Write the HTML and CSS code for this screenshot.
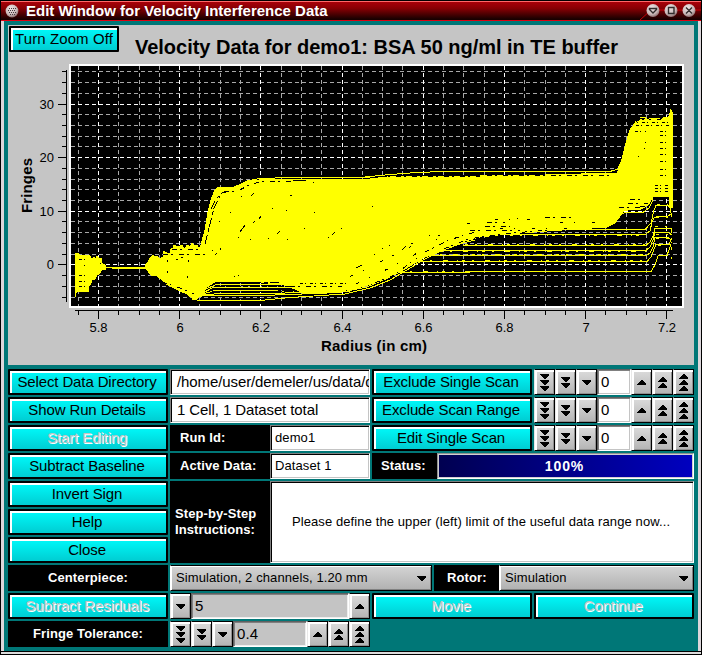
FILE: index.html
```html
<!DOCTYPE html>
<html lang="en">
<head>
<meta charset="utf-8">
<title>Edit Window for Velocity Interference Data</title>
<link rel="stylesheet" href="styles.css">
</head>
<body>
<svg class="defs" aria-hidden="true">
  <defs>
    <symbol id="d1" viewBox="0 0 9 17"><path d="M0 6h9v1L5 11H4L0 7z"/></symbol>
    <symbol id="d2" viewBox="0 0 9 17"><path d="M0 3h9v1L5 8H4L0 4zM0 9h9v1L5 14H4L0 10z"/></symbol>
    <symbol id="d3" viewBox="0 0 9 17"><path d="M0 0h9v1L5 5H4L0 1zM0 6h9v1L5 11H4L0 7zM0 12h9v1L5 17H4L0 13z"/></symbol>
    <symbol id="u1" viewBox="0 0 9 17"><path d="M4 6h1l4 4v1H0v-1z"/></symbol>
    <symbol id="u2" viewBox="0 0 9 17"><path d="M4 3h1l4 4v1H0V7zM4 9h1l4 4v1H0v-1z"/></symbol>
    <symbol id="u3" viewBox="0 0 9 17"><path d="M4 0h1l4 4v1H0V4zM4 6h1l4 4v1H0v-1zM4 12h1l4 4v1H0v-1z"/></symbol>
    <radialGradient id="ball" cx=".4" cy=".3" r=".75"><stop offset="0" stop-color="#f0e4e4"/><stop offset=".65" stop-color="#c8b8b8"/><stop offset="1" stop-color="#806060"/></radialGradient>
  </defs>
</svg>
<div class="window">
  <header class="titlebar">
    <svg class="app-icon" viewBox="0 0 14 14"><circle cx="7" cy="7" r="6.4" fill="url(#ball)"/><path d="M4 4.5h7M3 6.5h8M4 8.5h7M5 10.5h5" stroke="#443a3e" stroke-dasharray="1 1"/></svg>
    <h1>Edit Window for Velocity Interference Data</h1>
    <svg class="controls" viewBox="0 0 62 19"><path d="M1 18L12 8H62" fill="none" stroke="#c80008"/>
      <g fill="url(#ball)"><circle cx="14" cy="8.5" r="6.5"/><circle cx="32" cy="8.5" r="6.5"/><circle cx="50" cy="8.5" r="6.5"/></g>
      <path d="M10.500 6.500h7v1L14 11l-3.500-3.500zM29.500 5.500h5.500v6h-5.500zM47 5.500l6 6M53 5.500l-6 6" fill="none" stroke="#302c2c" stroke-width="1.400"/>
    </svg>
  </header>
  <main>
    <section class="plot">
      <button class="btn zoom">Turn Zoom Off</button>
      <svg class="chart" viewBox="8 25 686 340">
        <text class="t-title" x="135" y="54" textLength="483">Velocity Data for demo1: BSA 50 ng/ml in TE buffer</text>
        <rect x="69" y="64" width="615" height="244" fill="#fff"/>
        <rect x="71" y="66" width="611" height="240"/>
        <g class="grid">
          <path class="minor" d="M71 71.500H682M71 82.500H682M71 93.500H682M71 114.500H682M71 125.500H682M71 136.500H682M71 146.500H682M71 168.500H682M71 179.500H682M71 189.500H682M71 200.500H682M71 221.500H682M71 232.500H682M71 243.500H682M71 254.500H682M71 275.500H682M71 286.500H682M71 297.500H682M78.500 66V306M118.500 66V306M139.500 66V306M159.500 66V306M199.500 66V306M220.500 66V306M240.500 66V306M281.500 66V306M301.500 66V306M321.500 66V306M362.500 66V306M382.500 66V306M402.500 66V306M443.500 66V306M463.500 66V306M484.500 66V306M524.500 66V306M545.500 66V306M565.500 66V306M605.500 66V306M626.500 66V306M646.500 66V306"/>
          <path class="major" d="M71 104.500H682M71 157.500H682M71 211.500H682M71 264.500H682M98.500 66V306M179.500 66V306M260.500 66V306M342.500 66V306M423.500 66V306M504.500 66V306M585.500 66V306M666.500 66V306"/>
        </g>
        <g class="scans">
          <path class="body" d="M75 254l2-1 3 2 9 0 1 1 2 4 2-3 2 2 1-3 2 3 2-1 1 5 3 2 0 4-3 0-2 4-3 2-2 4-3 1-2 5-2 2 0 4-10 0-2 2-1 4z"/>
          <path class="body" d="M145 268l1-4 2-2 2-4 3-3 1 2 3-1 2 3 4-2 0-6 4 2 3 0 1-4 2-1 1-3 4 2 4-2 3 5 2-5 3 2 2-4 2 3 3-1 2 5 2-5 4-15 3-18 3-12 4-10 4-3 12 1 8-3 10-4 20-2H370L395 176H480L545 175 617 173 621 164 626 143 630 130 635 123 639 121 641 119 643 122 646 118 650 121 654 118 659 121 664 118 668 119 670 114 671 110 672 112V207H670L669 196H653L649 204 643 208 632 209 624 211 615 223 607 227 547 231 507 234 480 237 465 241 448 248 425 257 400 272 378 282 358 288 340 291 302 292 285 285 250 281 216 281 207 287 202 295 195 300 187 294 180 291 172 287 166 284 162 280 156 275 151 275 148 271z"/>
          <path d="M104 267.500H147M112 268.500H145M203 247L207 230 211 209 215 198 219 191 223 188.500H233L240 185 247 181 260 178.500 290 177.500H370M365 177L390 174.500 417 172.500 443 171.500H610L618 169 623 157 627 140 631 129 636 121M640 117.500H646M649 118.500H660M663 117.500H669L671 109M192 299.500L201 300.500 260 300.500 270 299.500 290 297.500 345 294 370 288 390 280 407 270 423 260 443 250 463 243M196 297L205 295.500H260L290 294.500 340 292.500 367 287 388 278 407 267 425 256 448 247 475 240M203 294L215 290.500H270L310 293 350 291M203 293L213 287.500H290L320 291 350 289M206 289L216 284.500H280L310 288 340 289M202 295L220 293.500H275L295 292.500"/>
          <path d="M480 235.500L510 234.500H645L650 231 652 222 654 218 657 216.500H667L671 214M500 229.500H645L651 223 654 210 656 205.500H668L670 208 672 217M463 245.500H646L650 242 653 236 655 228.500H667L671 229M435 250.500H646L650 247 653 240 655 232.500H668L672 235M423 255.500H646L650 253 653 247 655 237.500H668L671 240M413 261.500H647L651 257 654 249 656 244.500H669L672 238M395 272.500H440L500 271.500H651L655 265 658 256 659 255.500H667L671 244M613 224L620 215 625 212.500H643L649 208 652 202 653 196M620 213L628 209H641L648 203 651 196"/>
          <path stroke-dasharray="3 7 2 11 5 9 1 4" d="M465 244.500H646M440 251.500H646M430 254.500H646M420 260.500H646M400 271.500H640M510 235.500H645M657 204.500H668M656 217.500H668M655 226.500H668M656 234.500H668M656 238.500H668M658 245.500H668M671 205V262"/>
        </g>
        <g class="gaps">
          <path stroke-dasharray="9 3 4 2" d="M211 209L216 199 222 193 231 190.500M205 244L209 228 214 208 220 196M216 282.500H282M214 286.500H300M212 291.500H296M222 298.500H262"/>
          <path stroke-dasharray="5 3 2 6" d="M224 191.500H237L249 185 262 181.500H292M163 254.500H205M172 249.500H203M162 282L180 288 194 294M290 286.500H342M375 283L394 275 417 258M425 252L449 240 475 232M444 249L468 239 507 233.500 550 230M487 222.500H505M470 230.500H520M485 226.500H510M545 217.500H576M380 176.500H480M487 175.500H612M628 203.500H648M630 199.500H645M619 207.500H641M640 206H648"/>
          <path stroke-dasharray="3 2 1 4" d="M632 122.500H669M636 125.500H669M635 131.500H646M660 131.500H669M660 135.500H668M660 142.500H668M660 148.500H668M660 154.500H668M660 161.500H668M660 169.500H668M660 175.500H668M655 185.500H668M655 188.500H668M655 191.500H668M79 259.500H86M79 275.500H86M79 281.500H86M79 286.500H86M300 283.500H350"/>
          <path stroke-dasharray="3 11 1 17" d="M495 219.500H530M560 222.500H606M500 228.500H570M350 276.500L372 266M380 262L412 246 440 235M356 284L394 266 421 251"/>
          <path d="M240 232l5-7M259 219l2-3M277 234l3-3M253 223l2-2M251 196l3-3M290 196l2-1M215 255l2-2M220 248v2M219 221h1M230 212h1M238 237h1M250 239h1M268 238h1M287 239h1M212 250h1M241 196h1M272 208h1M286 210h1M314 212h1M304 228h1M372 206h1M328 237h1M332 235l3-3M341 228h1M389 245h1M382 248h1M402 250l4-4M411 244l2-1M374 254h1M429 235h1M436 239h1M467 223h3M517 218h1M167 260v2M167 271v2M187 276v2M188 260v2M176 259h2M181 257h2M84 265h1M100 263h1M103 263h1M356 268l6-3M313 182h1M238 275h1M234 276h1M293 180h13M638 156h1M644 148h1M645 142h1"/>
        </g>
        <path class="axis" d="M66.500 70V302M58 104.500H66M58 157.500H66M58 211.500H66M58 264.500H66M62 71.500H66M62 82.500H66M62 93.500H66M62 114.500H66M62 125.500H66M62 136.500H66M62 146.500H66M62 168.500H66M62 179.500H66M62 189.500H66M62 200.500H66M62 221.500H66M62 232.500H66M62 243.500H66M62 254.500H66M62 275.500H66M62 286.500H66M62 297.500H66M75 310.500H673M98.500 311V319M179.500 311V319M260.500 311V319M342.500 311V319M423.500 311V319M504.500 311V319M585.500 311V319M666.500 311V319M78.500 311V315M118.500 311V315M139.500 311V315M159.500 311V315M199.500 311V315M220.500 311V315M240.500 311V315M281.500 311V315M301.500 311V315M321.500 311V315M362.500 311V315M382.500 311V315M402.500 311V315M443.500 311V315M463.500 311V315M484.500 311V315M524.500 311V315M545.500 311V315M565.500 311V315M605.500 311V315M626.500 311V315M646.500 311V315"/>
        <g class="tick-y"><text x="54" y="109">30</text><text x="54" y="162">20</text><text x="54" y="216">10</text><text x="54" y="269">0</text></g>
        <g class="tick-x"><text x="98.500" y="332">5.8</text><text x="180" y="332">6</text><text x="261" y="332">6.2</text><text x="342.500" y="332">6.4</text><text x="423.500" y="332">6.6</text><text x="504.500" y="332">6.8</text><text x="586" y="332">7</text><text x="667" y="332">7.2</text></g>
        <text class="t-axis" x="321" y="351" textLength="106">Radius (in cm)</text>
        <text class="t-axis" transform="translate(32 213) rotate(-90)" textLength="55">Fringes</text>
      </svg>
    </section>
    <section class="panel">
      <button class="btn">Select Data Directory</button>
      <div class="field big path">/home/user/demeler/us/data/d</div>
      <button class="btn">Exclude Single Scan</button>
      <div class="counter"><i><svg><use href="#d3"/></svg></i><i><svg><use href="#d2"/></svg></i><i><svg><use href="#d1"/></svg></i><b>0</b><i><svg><use href="#u1"/></svg></i><i><svg><use href="#u2"/></svg></i><i><svg><use href="#u3"/></svg></i></div>

      <button class="btn">Show Run Details</button>
      <div class="field big">1 Cell, 1 Dataset total</div>
      <button class="btn">Exclude Scan Range</button>
      <div class="counter"><i><svg><use href="#d3"/></svg></i><i><svg><use href="#d2"/></svg></i><i><svg><use href="#d1"/></svg></i><b>0</b><i><svg><use href="#u1"/></svg></i><i><svg><use href="#u2"/></svg></i><i><svg><use href="#u3"/></svg></i></div>

      <button class="btn off">Start Editing</button>
      <div class="pair"><label>Run Id:</label><div class="field">demo1</div></div>
      <button class="btn">Edit Single Scan</button>
      <div class="counter"><i><svg><use href="#d3"/></svg></i><i><svg><use href="#d2"/></svg></i><i><svg><use href="#d1"/></svg></i><b>0</b><i><svg><use href="#u1"/></svg></i><i><svg><use href="#u2"/></svg></i><i><svg><use href="#u3"/></svg></i></div>

      <button class="btn">Subtract Baseline</button>
      <div class="pair"><label>Active Data:</label><div class="field">Dataset 1</div></div>
      <div class="status"><label>Status:</label><div class="progress">100%</div></div>

      <button class="btn">Invert Sign</button>
      <div class="steps"><label>Step-by-Step<br>Instructions:</label><div class="field message">Please define the upper (left) limit of the useful data range now...</div></div>
      <button class="btn">Help</button>
      <button class="btn">Close</button>

      <label class="center">Centerpiece:</label>
      <div class="combos">
        <div class="combo">Simulation, 2 channels, 1.20 mm<svg><use href="#d1"/></svg></div>
        <label>Rotor:</label>
        <div class="combo rotor">Simulation<svg><use href="#d1"/></svg></div>
      </div>

      <button class="btn off">Subtract Residuals</button>
      <div class="counter dim"><i><svg><use href="#d1"/></svg></i><b>5</b><i><svg><use href="#u1"/></svg></i></div>
      <button class="btn off">Movie</button>
      <button class="btn off">Continue</button>

      <label class="center">Fringe Tolerance:</label>
      <div class="counter dim"><i><svg><use href="#d3"/></svg></i><i><svg><use href="#d2"/></svg></i><i><svg><use href="#d1"/></svg></i><b>0.4</b><i><svg><use href="#u1"/></svg></i><i><svg><use href="#u2"/></svg></i><i><svg><use href="#u3"/></svg></i></div>
    </section>
  </main>
  <footer></footer>
</div>
</body>
</html>
```
FILE: styles.css
```css
* { box-sizing: border-box; }
body { margin: 0; width: 702px; height: 655px; overflow: hidden; background: #000; font: 13px/16px "Liberation Sans", Arial, sans-serif; letter-spacing: .1px; color: #000; }
.defs { position: absolute; width: 0; height: 0; }
.window { width: 702px; height: 655px; padding: 1px 1px 1px; display: flex; flex-direction: column; }
.titlebar { height: 20px; border-top: 1px solid #ff6868; border-bottom: 1px solid #e00010; background: linear-gradient(#a80008, #880004 35%, #180000 95%); display: flex; align-items: flex-start; }
.app-icon { width: 14px; height: 14px; margin: 2px 0 0 4px; }
.titlebar h1 { margin: 0 auto 0 7px; font-size: 15px; line-height: 17px; letter-spacing: 0; color: #fff; white-space: nowrap; text-shadow: 1px 1px #400; }
.controls { width: 62px; height: 19px; }
main { height: 630px; border: solid #dcd6da; border-width: 0 3px; background: #007777; padding: 4px 4px 0; }
footer { height: 3px; border-top: 1px solid #000; background: #dcdcdc; }

.plot { height: 340px; background: #c5c5c5; position: relative; }
.chart { display: block; width: 686px; height: 340px; letter-spacing: 0; }
.chart text { font-family: "Liberation Sans", Arial, sans-serif; }
.t-title { font-size: 20px; font-weight: bold; }
.t-axis { font-size: 15px; font-weight: bold; }
.tick-x { font-size: 13px; text-anchor: middle; }
.tick-y { font-size: 13px; text-anchor: end; }
.grid path, .axis, .scans path, .gaps path { fill: none; shape-rendering: crispEdges; }
.grid path { stroke-dasharray: 4 3; }
.minor { stroke: #a8a8a8; }
.major { stroke: #fff; }
.axis, .gaps path { stroke: #000; }
.scans path { stroke: #ff0; }
.scans .body { fill: #ff0; }

.btn { margin: 0; padding: 0 2px 1px 0; height: 26px; border: 2px solid #000; border-radius: 1px; background: linear-gradient(#00fafa, #00cdd2); box-shadow: inset 2px 2px #fff; font: 15px/20px "Liberation Sans", Arial, sans-serif; letter-spacing: -0.12px; color: #000; text-align: center; white-space: nowrap; }
.zoom { position: absolute; left: 1px; top: 1px; width: 110px; height: 26px; letter-spacing: .1px; padding-right: 0; }
.off { color: #c4c4c4; text-shadow: 1px 1px #fff; }

.panel { display: grid; grid-template-columns: 160px 200px 160px 160px; grid-auto-rows: 26px; gap: 2px; margin-top: 4px; }
label { background: #000; color: #fff; font-weight: bold; display: flex; align-items: center; padding-left: 10px; }
label.center { justify-content: center; padding: 0; }
.field { background: #fff; border: 1px solid #808080; border-right-color: #fff; border-bottom-color: #fff; box-shadow: inset 1px 1px #000, inset -1px -1px #c4c4c4; padding: 4px; overflow: hidden; white-space: nowrap; }
.big { font-size: 15px; padding: 4px 6px; letter-spacing: -.1px; }
.path { padding-right: 0; }
.pair { display: grid; grid-template-columns: 100px 100px; }
.status { grid-column: span 2; display: grid; grid-template-columns: 65px 1fr; }
.status label { padding-left: 9px; }
.progress { border: 1px solid #909090; border-right-color: #fff; border-bottom-color: #fff; background: linear-gradient(90deg, #000050, #0000c0); box-shadow: inset 1px 1px #d0d0d0, inset -1px -1px #d0d0d0; color: #fff; font-size: 14px; font-weight: bold; line-height: 24px; text-align: center; letter-spacing: .9px; padding-right: 2px; }
.steps { grid-area: 5 / 2 / span 3 / span 3; display: grid; grid-template-columns: 100px 1fr; }
.steps label { padding-left: 5px; }
.message { display: flex; align-items: center; justify-content: center; padding: 0 6px 0 4px; }
.combos { grid-column: span 3; display: grid; grid-template-columns: 262px 65px 195px; }
.combos label { margin-left: 2px; width: 65px; padding-left: 13px; }
.combo { border: 1px solid #000; border-left-color: #fff; box-shadow: inset 1px 1px #fff, inset -1px -1px #808080; background: linear-gradient(#d4d4d4, #b0b0b0); display: flex; align-items: center; justify-content: space-between; padding: 0 5px; }
.combo svg { width: 9px; height: 17px; shape-rendering: crispEdges; }
.rotor { margin-left: 2px; width: 195px; }

.counter { display: flex; }
.counter i { width: 21px; height: 26px; border: 1px solid #000; border-left-color: #e8e8e8; box-shadow: inset 2px 2px #fff, inset -1px -1px #909090; background: linear-gradient(#dcdcdc, #b4b4b4); display: flex; align-items: center; justify-content: center; }
.counter svg { width: 9px; height: 17px; shape-rendering: crispEdges; }
.counter b { flex: 1; font-weight: normal; font-size: 15px; line-height: 17px; padding: 3px; background: #fff; border: 1px solid #606060; border-right-color: #fff; border-bottom-color: #fff; box-shadow: inset 1px 1px #808080, inset -1px -1px #c4c4c4; }
.dim b { background: #c4c4c4; box-shadow: inset 1px 1px #808080, inset -1px -1px #eee; }
```
